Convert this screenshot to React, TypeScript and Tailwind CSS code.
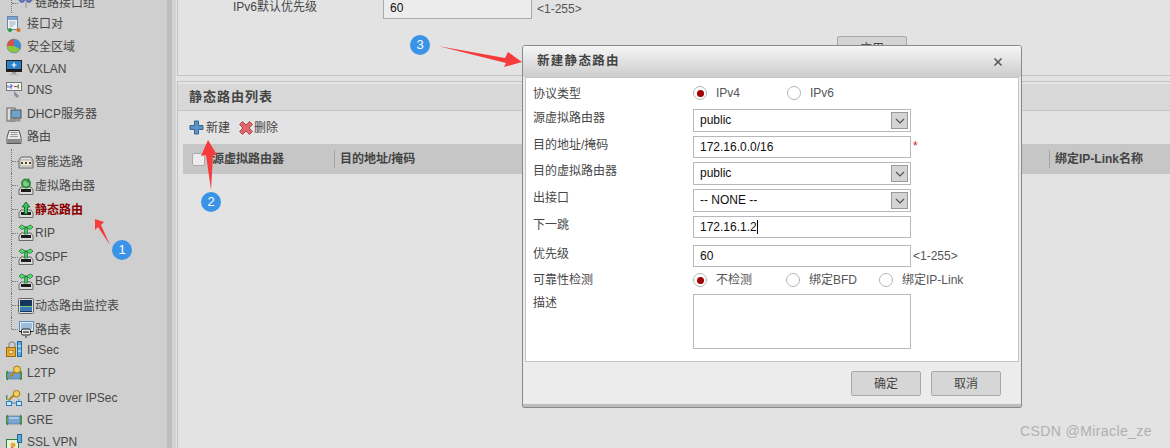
import React from "react";

const font = "font-['Liberation_Sans','Noto_Sans_CJK_SC',sans-serif]";

type IconName =
  | "link" | "pair" | "zone" | "vxlan" | "dns" | "dhcp" | "route" | "smart" | "vr" | "static"
  | "sprout" | "monitor" | "table" | "ipsec" | "l2tp" | "l2tpo" | "gre" | "ssl";

function Drive({ y = 9 }: { y?: number }) {
  return (
    <g>
      <path d={`M3 ${y}h10l2 3v4.500H1V${y + 3}z`} fill="#dcdcdc" stroke="#666" strokeWidth="1" />
      <rect x="3" y={y + 2} width="10" height="3" fill="#1c1c1c" />
    </g>
  );
}

function Sprout() {
  return (
    <g>
      <rect x="6.500" y="3" width="3" height="7" fill="#3fcf5f" stroke="#14602a" strokeWidth=".6" />
      <path d="M8 3.500L3.500 1 1 3l2.500 2.500zM8 3.500L12.500 1 15 3l-2.500 2.500z" fill="#4fe06a" stroke="#14602a" strokeWidth=".7" />
    </g>
  );
}

function Icon({ name }: { name: IconName }) {
  const body = () => {
    switch (name) {
      case "link":
        return (
          <g>
            <path d="M0 6h16M8 1v13" stroke="#999" strokeWidth="1" />
            <circle cx="4" cy="6" r="2.400" fill="#6d7fc8" stroke="#3c4a99" strokeWidth=".8" />
            <circle cx="11" cy="6" r="2.400" fill="#6d7fc8" stroke="#3c4a99" strokeWidth=".8" />
          </g>
        );
      case "pair":
        return (
          <g>
            <rect x="1.500" y="0.500" width="10" height="13" fill="#eef3fa" stroke="#6e85a8" />
            <rect x="2" y="1" width="9" height="3" fill="#7ba4d6" />
            <path d="M3.500 6h6M3.500 8h6M3.500 10h4" stroke="#9aa" strokeWidth="1" />
            <circle cx="4" cy="14" r="2" fill="#1f9d3a" />
            <circle cx="12.500" cy="14" r="2" fill="#e0701c" />
          </g>
        );
      case "zone":
        return (
          <g>
            <circle cx="8" cy="8" r="7" fill="#3a8fd6" stroke="#777" strokeWidth=".5" />
            <path d="M8 8L1 8A7 7 0 0 1 8 1z" fill="#d8504a" />
            <path d="M8 8L1 8A7 7 0 0 0 14 11z" fill="#8cc63f" />
          </g>
        );
      case "vxlan":
        return (
          <g>
            <rect x="0.500" y="0.500" width="15" height="11" fill="#2b7fc4" stroke="#222" />
            <rect x="1" y="9" width="14" height="2" fill="#1c1c1c" />
            <path d="M8 2.500v5M5.500 5h5" stroke="#fff" strokeWidth="1.200" />
            <rect x="6" y="12" width="4" height="2" fill="#999" />
            <rect x="3" y="14" width="10" height="1.500" fill="#bbb" />
          </g>
        );
      case "dns":
        return (
          <g>
            <rect x="0.500" y="0.500" width="15" height="8" fill="#f3f3f3" stroke="#777" />
            <path d="M2 3v3M4 3h2v1.500H4V6h2" stroke="#2b4fb0" strokeWidth=".8" fill="none" />
            <path d="M8 4.500h3" stroke="#c33" strokeWidth="1" />
            <path d="M13 3h-1v3h1" stroke="#1a7a2a" strokeWidth="1" fill="none" />
            <path d="M8 9l5 5-2 2-3-3z" fill="#8a8fa0" />
          </g>
        );
      case "dhcp":
        return (
          <g>
            <rect x="1" y="2" width="8" height="13" fill="#ddd" stroke="#666" />
            <rect x="5" y="4" width="10" height="8" fill="#6fa5c9" stroke="#555" />
            <rect x="4" y="13" width="10" height="2" fill="#aaa" stroke="#666" strokeWidth=".5" />
          </g>
        );
      case "route":
        return (
          <g>
            <path d="M3 1.500h10l2 7v6H1v-6z" fill="#e8e8e8" stroke="#555" />
            <path d="M4.500 3.500h7M4.500 5.500h7M4 7.500h8" stroke="#999" />
            <rect x="1.500" y="10" width="13" height="4" fill="#8a8a8a" />
          </g>
        );
      case "smart":
        return (
          <g>
            <path d="M3 3h10l2 3v8H1V6z" fill="#dedede" stroke="#666" />
            <rect x="2" y="6" width="12" height="6" fill="#efe9d6" stroke="#777" strokeWidth=".5" />
            <path d="M4 8v2M8 8v2M12 8v2" stroke="#333" strokeWidth="1.800" />
          </g>
        );
      case "vr":
        return (
          <g>
            <Drive />
            <circle cx="8" cy="5.500" r="4" fill="#86c886" stroke="#2f8f3f" strokeWidth="2" />
            <path d="M11 0l1.500 5-4.500-1z" fill="#2f8f3f" />
          </g>
        );
      case "static":
        return (
          <g>
            <Drive y={8} />
            <path d="M8 0L4 5h2.500v7h3V5H12z" fill="#37c45a" stroke="#0d5a24" strokeWidth=".8" />
          </g>
        );
      case "sprout":
        return (
          <g>
            <Drive />
            <Sprout />
          </g>
        );
      case "monitor":
        return (
          <g>
            <rect x="0.500" y="0.500" width="15" height="15" rx="1" fill="#ddd" stroke="#666" />
            <rect x="2" y="2" width="12" height="12" fill="#16365e" />
            <rect x="2" y="9" width="12" height="4" fill="#3d79b8" />
            <path d="M2 8.500h12" stroke="#6fd06f" strokeWidth="1" />
          </g>
        );
      case "table":
        return (
          <g>
            <rect x="1.500" y="0.500" width="14" height="10" fill="#d9ecfa" stroke="#5f8fb8" />
            <path d="M3 3h11M3 5h11M3 7h11" stroke="#5f8fb8" strokeWidth="1" />
            <rect x="3.500" y="8" width="9" height="6" rx="1.500" fill="#e5e5e5" stroke="#222" />
            <rect x="5" y="10" width="6" height="2" fill="#777" />
            <path d="M1 10.500h2.500M12.500 10.500H15M8 15v2" stroke="#222" strokeWidth="1" />
          </g>
        );
      case "ipsec":
        return (
          <g>
            <path d="M3 7V4a3 3 0 0 1 6 0v3" fill="none" stroke="#999" strokeWidth="1.500" />
            <rect x="0.500" y="6.500" width="9" height="9" fill="#e8a93a" stroke="#9c6a12" />
            <rect x="3" y="9.500" width="4" height="3" fill="#fbe4a4" stroke="#9c6a12" strokeWidth=".6" />
            <rect x="11.500" y="0.500" width="4" height="15" fill="#5aa8dc" stroke="#22699c" />
            <path d="M12 5h3M12 10h3" stroke="#fff" />
          </g>
        );
      case "l2tp":
        return (
          <g>
            <rect x="2" y="7" width="12" height="7" rx="1" fill="#6f9ed0" stroke="#4d7199" strokeWidth=".6" />
            <path d="M2 6.500c-2 1-2 7 0 8M14 6.500c2 1 2 7 0 8" stroke="#3f8a3f" strokeWidth="2" fill="none" />
            <path d="M4 12l5-5" stroke="#b98514" strokeWidth="2" />
            <circle cx="11" cy="4.500" r="3.500" fill="#f1cf5a" stroke="#a5780f" />
          </g>
        );
      case "l2tpo":
        return (
          <g>
            <path d="M3 9v4M13 9v4M3 13h10" stroke="#3a8dcc" strokeWidth="1" />
            <rect x="0.500" y="11.500" width="5" height="4" fill="#cbe4f7" stroke="#2b7dbd" />
            <rect x="10.500" y="11.500" width="5" height="4" fill="#cbe4f7" stroke="#2b7dbd" />
            <path d="M1.500 5.500c-1.500 1-1.500 3 0 4" stroke="#3f8a3f" strokeWidth="1.500" fill="none" />
            <path d="M3 10l5-5" stroke="#b98514" strokeWidth="2" />
            <circle cx="10.500" cy="3.800" r="3.300" fill="#f1cf5a" stroke="#a5780f" />
          </g>
        );
      case "gre":
        return (
          <g>
            <rect x="2" y="4" width="12" height="8" rx="1" fill="#79a5d2" stroke="#4d7199" strokeWidth=".6" />
            <rect x="3" y="5" width="10" height="2" fill="#a9c7e4" />
            <path d="M2 3.500c-2 1-2 8 0 9M14 3.500c2 1 2 8 0 9" stroke="#3f8a3f" strokeWidth="2" fill="none" />
          </g>
        );
      case "ssl":
        return (
          <g>
            <rect x="0.500" y="5.500" width="12" height="10" fill="#e9f3dc" stroke="#2e7d3a" />
            <rect x="11.500" y="0.500" width="4" height="8" fill="#5aa8dc" stroke="#22699c" />
            <circle cx="7" cy="11" r="2.500" fill="#e8a93a" />
            <path d="M5 14l5 2" stroke="#d22" strokeWidth="2" />
          </g>
        );
    }
  };
  return (
    <svg width="16" height="17" viewBox="0 0 16 17" className="shrink-0">
      {body()}
    </svg>
  );
}

type NavItem = { label: string; icon: IconName; h: string; sub?: boolean; active?: boolean; last?: boolean };

const nav: NavItem[] = [
  { label: "链路接口组", icon: "link", h: "h-[21px]", sub: true },
  { label: "接口对", icon: "pair", h: "h-[22px]" },
  { label: "安全区域", icon: "zone", h: "h-[23px]" },
  { label: "VXLAN", icon: "vxlan", h: "h-[21px]" },
  { label: "DNS", icon: "dns", h: "h-[22px]" },
  { label: "DHCP服务器", icon: "dhcp", h: "h-[24px] pt-[2px]" },
  { label: "路由", icon: "route", h: "h-[24px]" },
  { label: "智能选路", icon: "smart", h: "h-[24px] pt-[2px]", sub: true },
  { label: "虚拟路由器", icon: "vr", h: "h-[24px] pt-[2px]", sub: true },
  { label: "静态路由", icon: "static", h: "h-[24px] pt-[2px]", sub: true, active: true },
  { label: "RIP", icon: "sprout", h: "h-[23px]", sub: true },
  { label: "OSPF", icon: "sprout", h: "h-[25px]", sub: true },
  { label: "BGP", icon: "sprout", h: "h-[24px]", sub: true },
  { label: "动态路由监控表", icon: "monitor", h: "h-[24px] pt-[2px]", sub: true },
  { label: "路由表", icon: "table", h: "h-[23px] pt-[2px]", sub: true, last: true },
  { label: "IPSec", icon: "ipsec", h: "h-[21px] pb-[2px]" },
  { label: "L2TP", icon: "l2tp", h: "h-[24px]" },
  { label: "L2TP over IPSec", icon: "l2tpo", h: "h-[24px] pt-[2px]" },
  { label: "GRE", icon: "gre", h: "h-[22px]" },
  { label: "SSL VPN", icon: "ssl", h: "h-[24px] pb-[2px]" },
];

function Sidebar() {
  return (
    <aside className="w-[167px] shrink-0 h-full overflow-hidden bg-[#cfcfcf] pl-[6px]">
      <div className="-mt-[8px]">
        {nav.map((n) => (
          <div key={n.label} className={`${n.h} flex items-center relative ${n.sub ? "pl-[12px]" : ""}`}>
            {n.sub && (
              <>
                <span className={`absolute left-[5px] top-0 border-l border-dotted border-[#777] ${n.last ? "h-1/2" : "h-full"}`} />
                <span className="absolute left-[6px] w-[6px] top-1/2 border-t border-dotted border-[#777]" />
              </>
            )}
            <Icon name={n.icon} />
            <span
              className={`text-[12px] leading-none whitespace-nowrap ${n.sub ? "ml-[1px]" : "ml-[5px]"} ${
                n.active ? "font-bold text-[#8b0000]" : "text-[#474747]"
              }`}
            >
              {n.label}
            </span>
          </div>
        ))}
      </div>
    </aside>
  );
}

function Splitter() {
  return (
    <div className="flex shrink-0 h-full">
      <div className="w-[5px] bg-[#bdbdbd]" />
      <div className="w-[4px] bg-[#d4d4d4]" />
    </div>
  );
}

function Main() {
  return (
    <main className="flex-1 min-w-0 h-full bg-[#e3e3e3] pl-[1px] flex flex-col">
      <section className="h-[76px] shrink-0 border-l border-b border-[#c4c4c4] relative pl-[55px]">
        <div className="flex items-center pt-0 h-[19px]">
          <span className="w-[150px] text-[12px] text-[#474747] -mt-[6px]">IPv6默认优先级</span>
          <div className="w-[149px] h-[19px] border-b border-x border-[#aaa] bg-[#ececec] pl-[6px] text-[12px] leading-[17px] text-[#111]">60</div>
          <span className="ml-[5px] text-[12px] -mt-[2px] text-[#555]">&lt;1-255&gt;</span>
        </div>
        <div className="flex justify-end pr-[263px] pt-[17px]">
          <button className="w-[70px] h-[26px] border border-[#a9a9a9] rounded-[2px] bg-[#d4d4d4] text-[12px] text-[#444] leading-[22px]">应用</button>
        </div>
      </section>
      <section className="mt-[5px] flex-1 border-l border-t border-[#c4c4c4] pt-[2px]">
        <div className="h-[27px] bg-[#d8d8d8] border-b border-[#c6c6c6] pl-[11px] flex items-center text-[13px] font-bold tracking-[1px] text-[#444]">
          静态路由列表
        </div>
        <div className="h-[33px] flex items-center pl-[11px] text-[12px] text-[#444]">
          <svg width="15" height="15" viewBox="0 0 15 15">
            <path d="M5.500 1h4v4.500H14v4H9.500V14h-4V9.500H1v-4h4.500z" fill="#5c93c8" stroke="#33658f" />
          </svg>
          <span className="ml-[2px]">新建</span>
          <svg width="14" height="14" viewBox="0 0 14 14" className="ml-[9px]">
            <path d="M3.500 .5L7 4l3.500-3.500 3 3L10 7l3.500 3.500-3 3L7 10l-3.500 3.500-3-3L4 7 .5 3.500z" fill="#e0686a" stroke="#a94a4a" />
          </svg>
          <span className="ml-[1px]">删除</span>
        </div>
        <div className="ml-[5px] h-[30px] bg-[#c6c6c6] flex items-center text-[12px] font-bold text-[#444] relative">
          <span className="ml-[9px] w-[13px] h-[13px] mr-[7px] bg-[#ececec] border border-[#aaa] rounded-[2px] shrink-0" />
          <span className="w-[122px]">源虚拟路由器</span>
          <span className="h-[18px] border-l border-[#a5a5a5]" />
          <span className="ml-[5px]">目的地址/掩码</span>
          <span className="ml-auto h-[18px] border-l border-[#a5a5a5]" />
          <span className="ml-[5px] mr-[27px]">绑定IP-Link名称</span>
        </div>
      </section>
    </main>
  );
}

function Radio({ on, label, w }: { on?: boolean; label: string; w: string }) {
  return (
    <div className={`${w} flex items-center shrink-0`}>
      <span className="w-[14px] h-[14px] rounded-full border border-[#b5b5b5] bg-white flex items-center justify-center shrink-0">
        {on && <span className="w-[7px] h-[7px] rounded-full bg-[#a00000]" />}
      </span>
      <span className="ml-[9px] text-[12px] text-[#555] whitespace-nowrap">{label}</span>
    </div>
  );
}

function Select({ value }: { value: string }) {
  return (
    <div className="w-[218px] h-[23px] border border-[#b8b8bc] bg-white flex items-center pl-[6px] pr-[2px] text-[12px] text-[#111]">
      <span className="flex-1 pb-[1px]">{value}</span>
      <span className="w-[17px] h-[17px] border border-[#9a9a9a] bg-[#d4d4d4] flex items-center justify-center">
        <svg width="10" height="6" viewBox="0 0 10 6">
          <path d="M1 1l4 4 4-4" fill="none" stroke="#555" strokeWidth="1.200" />
        </svg>
      </span>
    </div>
  );
}

function Text({ value, caret }: { value: string; caret?: boolean }) {
  return (
    <div className="w-[218px] h-[22px] border border-[#b8b8bc] bg-white flex items-center pl-[6px] text-[12px] text-[#111]">
      {value}
      {caret && <span className="w-px h-[14px] bg-black" />}
    </div>
  );
}

function Row({ label, h, children, mt }: { label: string; h: string; mt: string; children: React.ReactNode }) {
  return (
    <div className={`flex ${h} ${mt}`}>
      <span className="w-[160px] pt-[1px] text-[12px] text-[#474747] leading-[16px] whitespace-nowrap shrink-0">{label}</span>
      <div className="flex items-start">{children}</div>
    </div>
  );
}

function Modal() {
  return (
    <div className="absolute left-[522px] top-[45px] w-[500px] h-[363px] border border-[#8a8a8a] rounded-t-[3px] rounded-b-[2px] bg-[#ececec] flex flex-col overflow-hidden">
      <div className="h-[31px] shrink-0 bg-gradient-to-b from-[#f6f6f6] to-[#cdcdcd] flex items-center justify-between pl-[14px] pr-[18px]">
        <span className="text-[12.5px] font-bold tracking-[1.3px] text-[#444]">新建静态路由</span>
        <svg width="10" height="10" viewBox="0 0 10 10">
          <path d="M1.500 1.500l7 7M8.500 1.500l-7 7" stroke="#555" strokeWidth="1.500" />
        </svg>
      </div>
      <div className="mx-[2px] h-[285px] shrink-0 bg-white border border-[#c4c4c4] pl-[7px] pt-[7px]">
        <div className="flex h-[19px]">
          <span className="w-[160px] text-[12px] text-[#474747] leading-[16px] pt-[1px]">协议类型</span>
          <div className="flex h-[16px]">
            <Radio on label="IPv4" w="w-[94px]" />
            <Radio label="IPv6" w="w-[60px]" />
          </div>
        </div>
        <Row label="源虚拟路由器" h="h-[23px]" mt="mt-[5px]"><Select value="public" /></Row>
        <Row label="目的地址/掩码" h="h-[22px]" mt="mt-[4px]">
          <Text value="172.16.0.0/16" />
          <span className="ml-[2px] text-[12px] leading-[20px] text-[#e01030]">*</span>
        </Row>
        <Row label="目的虚拟路由器" h="h-[23px]" mt="mt-[4px]"><Select value="public" /></Row>
        <Row label="出接口" h="h-[23px]" mt="mt-[4px]"><Select value="-- NONE --" /></Row>
        <Row label="下一跳" h="h-[22px]" mt="mt-[4px]"><Text value="172.16.1.2" caret /></Row>
        <Row label="优先级" h="h-[22px]" mt="mt-[7px]">
          <Text value="60" />
          <span className="ml-[2px] text-[12px] leading-[23px] text-[#555]">&lt;1-255&gt;</span>
        </Row>
        <div className="flex h-[16px] mt-[5px]">
          <span className="w-[160px] text-[12px] text-[#474747] leading-[16px]">可靠性检测</span>
          <Radio on label="不检测" w="w-[93px]" />
          <Radio label="绑定BFD" w="w-[93px]" />
          <Radio label="绑定IP-Link" w="w-[90px]" />
        </div>
        <div className="flex mt-[6px]">
          <span className="w-[160px] pt-[1px] text-[12px] text-[#474747] leading-[16px]">描述</span>
          <div className="w-[218px] h-[55px] border border-[#b8b8bc] bg-white" />
        </div>
      </div>
      <div className="flex-1 flex justify-end gap-[10px] pr-[20px] pt-[9px]">
        <button className="w-[70px] h-[25px] border border-[#a9a9a9] rounded-[2px] bg-[#d6d6d6] text-[12px] text-[#444]">确定</button>
        <button className="w-[70px] h-[25px] border border-[#a9a9a9] rounded-[2px] bg-[#d6d6d6] text-[12px] text-[#444]">取消</button>
      </div>
      <div className="h-[3px] shrink-0 bg-[#bdbdbd]" />
    </div>
  );
}

function Badge({ n, cls }: { n: string; cls: string }) {
  return (
    <span className={`absolute ${cls} w-[20px] h-[20px] rounded-full bg-[#3a93e6] text-white text-[13px] leading-[20px] text-center`}>{n}</span>
  );
}

function Annotations() {
  return (
    <>
      <svg className="absolute left-0 top-0 pointer-events-none" width="1170" height="448" viewBox="0 0 1170 448">
        <polygon points="110,245 98,227 95,230 95,219 104,222 101,225" fill="#f53b3b" />
        <polygon points="211,190 206,155 201,156 208,140 217,155 213,155" fill="#f53b3b" />
        <polygon points="438,46 505,58 508,52 522,62 504,67 506,63" fill="#f53b3b" />
      </svg>
      <Badge n="1" cls="left-[112px] top-[240px]" />
      <Badge n="2" cls="left-[201px] top-[192px]" />
      <Badge n="3" cls="left-[410px] top-[35px]" />
      <span className="absolute left-[1020px] top-[422px] text-[14px] leading-[18px] tracking-[0.4px] text-[#b0b0b0]">CSDN @Miracle_ze</span>
    </>
  );
}

export default function App() {
  return (
    <div className={`${font} relative w-[1170px] h-[448px] overflow-hidden flex`}>
      <Sidebar />
      <Splitter />
      <Main />
      <Modal />
      <Annotations />
    </div>
  );
}
